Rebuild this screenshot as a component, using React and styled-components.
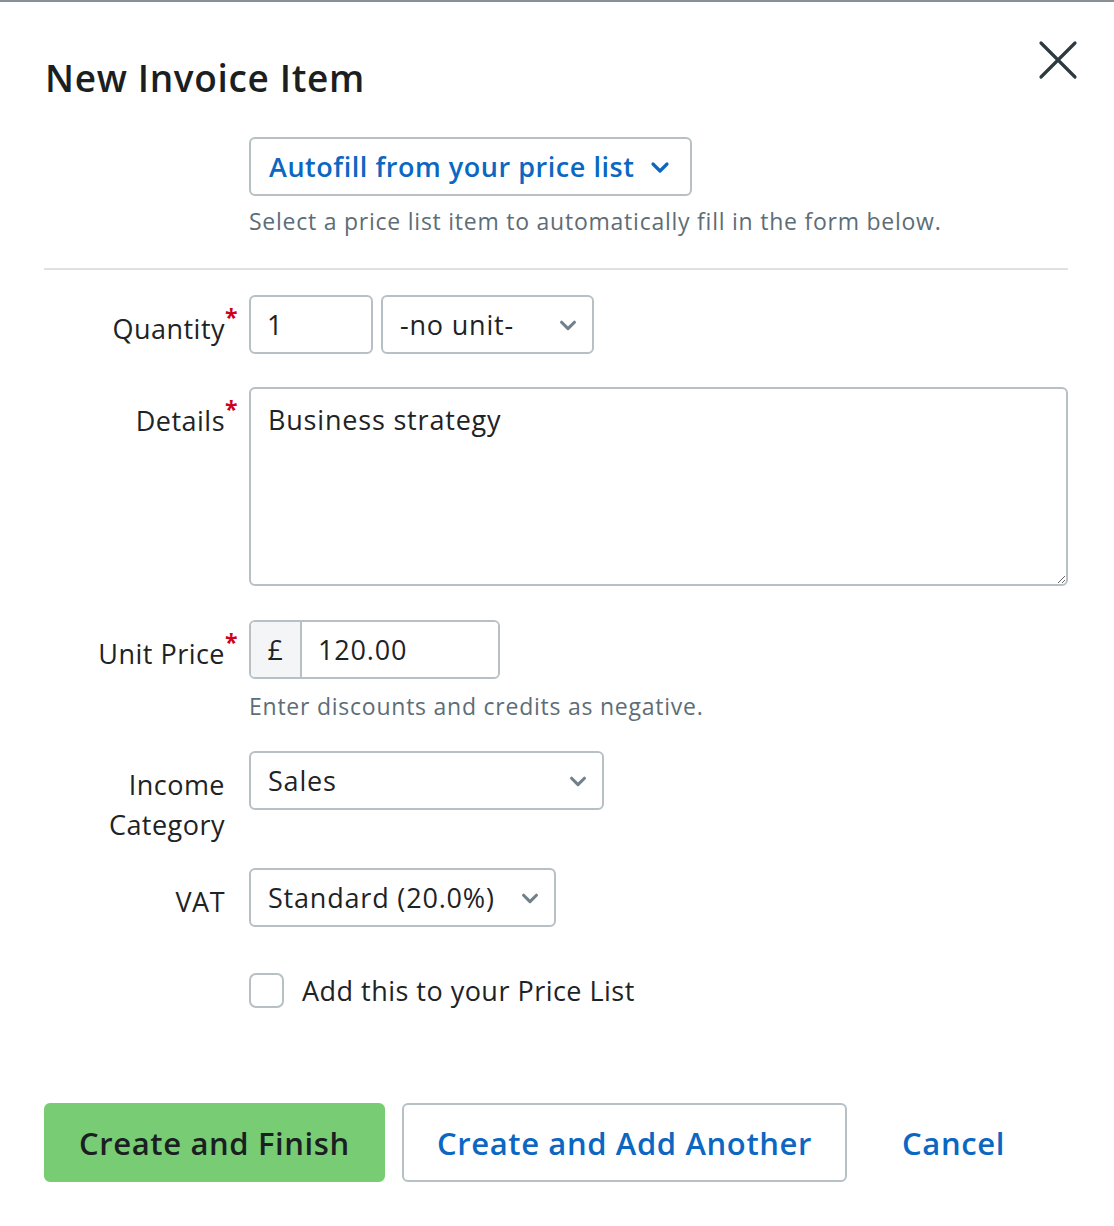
import React, { useState } from 'react';
import styled, { createGlobalStyle } from 'styled-components';

const GlobalStyle = createGlobalStyle`
  html, body {
    margin: 0;
    padding: 0;
    background: #ffffff;
  }
  body {
    font-family: "Open Sans", "Noto Sans", "Liberation Sans", sans-serif;
    letter-spacing: 0.03em;
    color: #1e2326;
  }
  * {
    box-sizing: border-box;
  }
`;

const Modal = styled.div`
  width: 1114px;
  min-height: 1226px;
  border-top: 2px solid #8a8f93;
  padding: 0 46px 0 44px;
`;

const Header = styled.div`
  display: flex;
  justify-content: space-between;
  align-items: flex-start;
  padding-top: 52px;
`;

const Title = styled.h2`
  margin: 0;
  padding-left: 1px;
  font-size: 37px;
  font-weight: 600;
  letter-spacing: 0.018em;
  line-height: 48px;
  color: #1b1f22;
`;

const CloseButton = styled.button`
  border: none;
  background: none;
  padding: 0;
  margin: -14px -10px 0 0;
  width: 40px;
  height: 40px;
  cursor: pointer;
  color: #2d3a40;
`;

const AutofillBlock = styled.div`
  padding: 35px 0 31px 205px;
  border-bottom: 2px solid #dde1e4;
`;

const AutofillButton = styled.button`
  display: inline-flex;
  align-items: center;
  gap: 14px;
  height: 59px;
  padding: 0 18px;
  border: 2px solid #b7c0c5;
  border-radius: 6px;
  background: #fff;
  font-family: inherit;
  letter-spacing: 0.02em;
  font-size: 27px;
  font-weight: 600;
  color: #0b67c2;
  cursor: pointer;
`;

const Help = styled.div`
  margin-top: ${(p) => p.$top || 12}px;
  font-size: 23px;
  letter-spacing: 0.033em;
  color: #5d6d77;
  line-height: 32px;
`;

const Form = styled.div`
  display: grid;
  grid-template-columns: 205px 1fr;
  padding-top: 25px;
`;

const Label = styled.label`
  position: relative;
  padding-right: 24px;
  padding-top: ${(p) => p.$pt || 14}px;
  text-align: right;
  font-size: 27px;
  line-height: 40px;
  color: #1e2326;
`;

const Star = styled.span`
  position: absolute;
  right: 11px;
  top: ${(p) => p.$top || 0}px;
  color: #d0021b;
  font-size: 23px;
  font-weight: 700;
`;

const Field = styled.div`
  padding-bottom: ${(p) => p.$pb || 33}px;
`;

const Row = styled.div`
  display: flex;
  gap: 8px;
`;

const boxStyle = `
  height: 59px;
  border: 2px solid #b7c0c5;
  border-radius: 6px;
  background: #fff;
  font-family: inherit;
  letter-spacing: 0.03em;
  font-size: 27px;
  color: #1e2326;
`;

const TextInput = styled.input`
  ${boxStyle}
  width: ${(p) => p.$w}px;
  padding: 0 16px;
  outline: none;
`;

const SelectBox = styled.div`
  ${boxStyle}
  width: ${(p) => p.$w}px;
  display: flex;
  align-items: center;
  justify-content: space-between;
  padding: 0 13px 0 17px;
`;

const Chevron = ({ color = '#71808a', size = 22, stroke = 3.4 }) => (
  <svg width={size} height={size} viewBox="0 0 24 24" fill="none">
    <path
      d="M5 9l7 7 7-7"
      stroke={color}
      strokeWidth={stroke}
      strokeLinecap="round"
      strokeLinejoin="round"
    />
  </svg>
);

const TextArea = styled.textarea`
  ${boxStyle}
  display: block;
  width: 100%;
  height: 199px;
  padding: 12px 17px;
  line-height: 38px;
  resize: vertical;
  outline: none;
`;

const PriceGroup = styled.div`
  ${boxStyle}
  width: 251px;
  display: flex;
  overflow: hidden;
`;

const Prefix = styled.span`
  width: 51px;
  display: flex;
  align-items: center;
  justify-content: center;
  background: #f3f5f7;
  border-right: 2px solid #b7c0c5;
  font-size: 27px;
`;

const PriceInput = styled.input`
  flex: 1;
  min-width: 0;
  border: none;
  padding: 0 16px;
  font-family: inherit;
  letter-spacing: 0.03em;
  font-size: 27px;
  color: #1e2326;
  outline: none;
`;

const CheckRow = styled.label`
  display: flex;
  align-items: center;
  gap: 18px;
  margin: 12px 0 0 205px;
  font-size: 27px;
  cursor: pointer;
`;

const CheckBox = styled.span`
  width: 35px;
  height: 35px;
  border: 2px solid #b7c0c5;
  border-radius: 7px;
  background: ${(p) => (p.$on ? '#0b67c2' : '#fff')};
`;

const Footer = styled.div`
  display: flex;
  align-items: center;
  gap: 17px;
  margin-top: 94px;
`;

const Button = styled.button`
  height: 79px;
  padding: 0 ${(p) => p.$px || 33}px;
  border-radius: 6px;
  font-family: inherit;
  letter-spacing: 0.02em;
  font-size: 31px;
  font-weight: 600;
  cursor: pointer;
  border: 2px solid ${(p) => (p.$variant === 'primary' ? '#78cc73' : p.$variant === 'link' ? 'transparent' : '#b7c0c5')};
  background: ${(p) => (p.$variant === 'primary' ? '#78cc73' : '#fff')};
  color: ${(p) => (p.$variant === 'primary' ? '#1b1f22' : '#0b67c2')};
`;

export default function App() {
  const [checked, setChecked] = useState(false);
  return (
    <Modal>
      <GlobalStyle />
      <Header>
        <Title>New Invoice Item</Title>
        <CloseButton aria-label="Close">
          <svg width="40" height="40" viewBox="0 0 40 40">
            <path d="M3 3L37 37M37 3L3 37" stroke="#2d3a40" strokeWidth="3.2" strokeLinecap="round" />
          </svg>
        </CloseButton>
      </Header>

      <AutofillBlock>
        <AutofillButton>
          Autofill from your price list
          <Chevron color="#0b67c2" size={24} stroke={3.2} />
        </AutofillButton>
        <Help $top={9}>Select a price list item to automatically fill in the form below.</Help>
      </AutofillBlock>

      <Form>
        <Label>
          Quantity<Star $top={2}>*</Star>
        </Label>
        <Field>
          <Row>
            <TextInput $w={124} defaultValue="1" />
            <SelectBox $w={213}>
              -no unit-
              <Chevron />
            </SelectBox>
          </Row>
        </Field>

        <Label>
          Details<Star $top={2}>*</Star>
        </Label>
        <Field $pb={34}>
          <TextArea defaultValue="Business strategy" />
        </Field>

        <Label>
          Unit Price<Star $top={2}>*</Star>
        </Label>
        <Field $pb={29}>
          <PriceGroup>
            <Prefix>£</Prefix>
            <PriceInput defaultValue="120.00" />
          </PriceGroup>
          <Help $top={11}>Enter discounts and credits as negative.</Help>
        </Field>

        <Label>
          Income
          <br />
          Category
        </Label>
        <Field $pb={58}>
          <SelectBox $w={355}>
            Sales
            <Chevron />
          </SelectBox>
        </Field>

        <Label>VAT</Label>
        <Field $pb={33}>
          <SelectBox $w={307}>
            Standard (20.0%)
            <Chevron />
          </SelectBox>
        </Field>
      </Form>

      <CheckRow onClick={() => setChecked(!checked)}>
        <CheckBox $on={checked} />
        Add this to your Price List
      </CheckRow>

      <Footer>
        <Button $variant="primary">Create and Finish</Button>
        <Button>Create and Add Another</Button>
        <Button $variant="link" $px={36}>Cancel</Button>
      </Footer>
    </Modal>
  );
}
